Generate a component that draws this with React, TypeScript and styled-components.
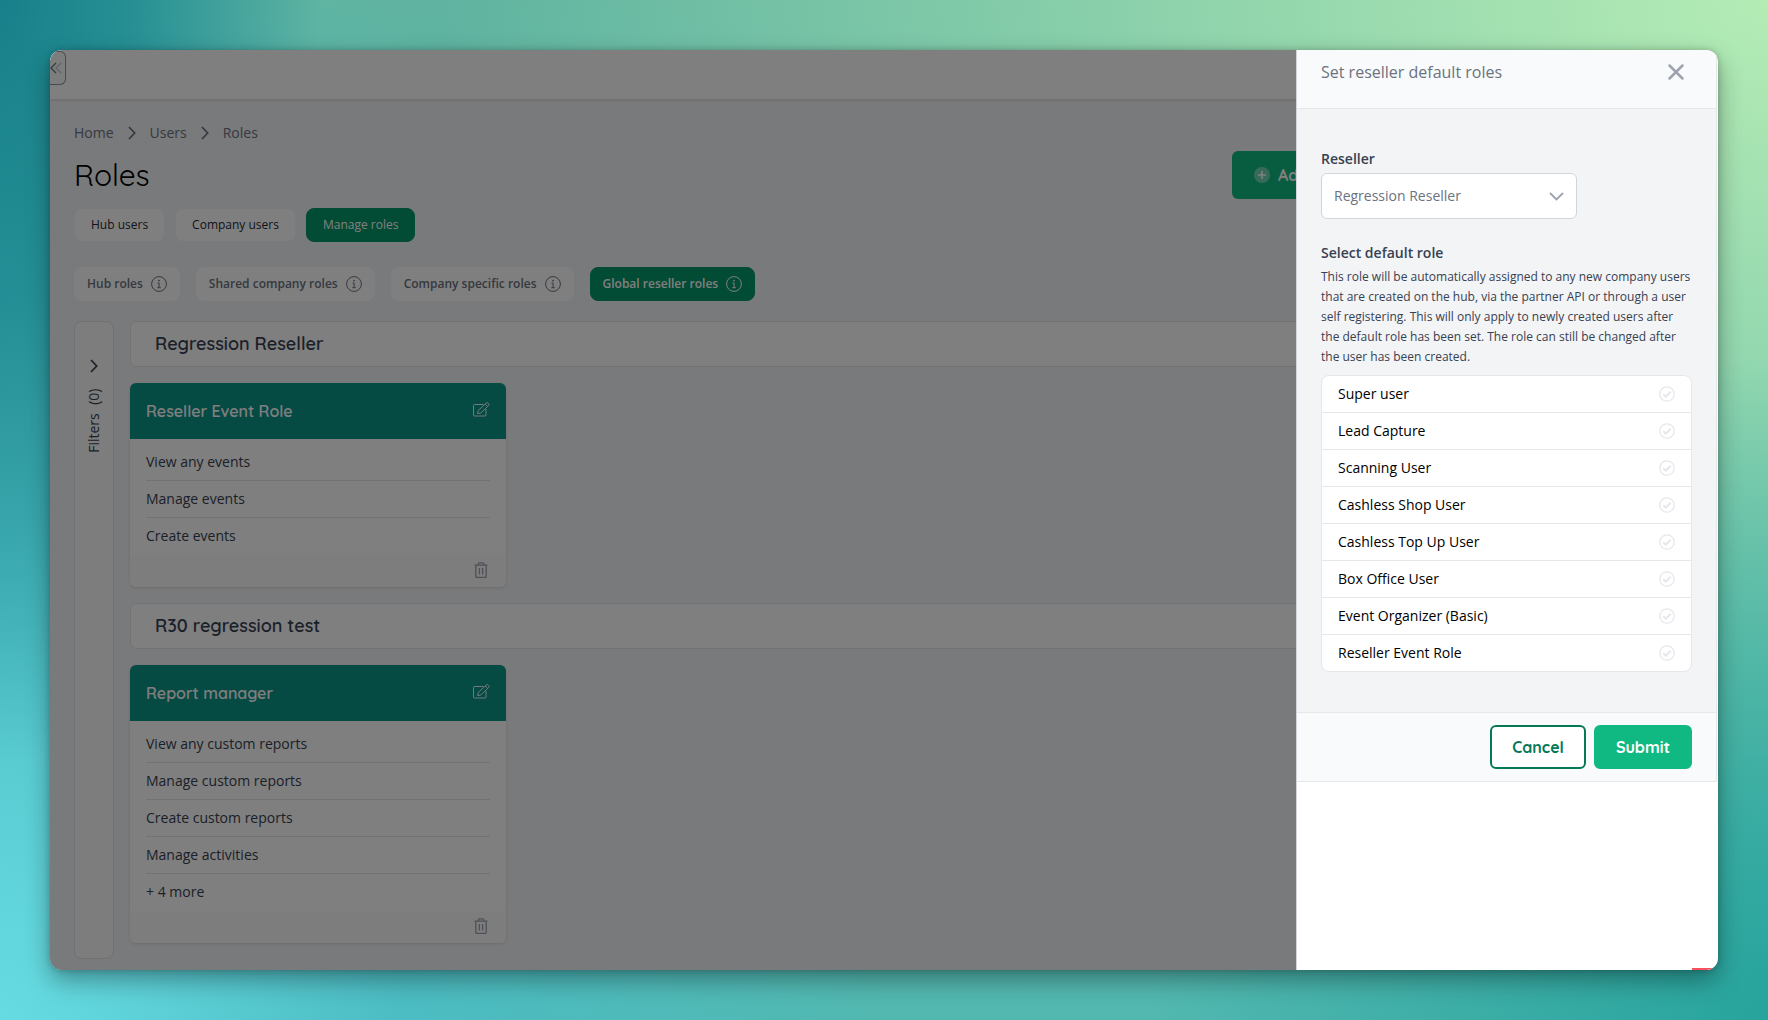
import React, { useState } from "react";
import styled, { createGlobalStyle, css } from "styled-components";

const headingFont = `Quicksand, Lato, "Open Sans", sans-serif`;
const bodyFont = `"Open Sans", "Noto Sans", sans-serif`;

const GlobalStyle = createGlobalStyle`
  *, *::before, *::after { box-sizing: border-box; }
  body {
    margin: 0;
    font-family: ${bodyFont};
    font-size: 14px;
    line-height: 20px;
    color: #374151;
  }
  button, select, input { font-family: inherit; }
  h1, h2, h3, p, ul, ol { margin: 0; padding: 0; }
  ul, ol { list-style: none; }
`;

const Backdrop = styled.div`
  height: 100vh;
  padding: 50px;
  background:
    radial-gradient(ellipse 18% 75% at 0% 0%, #17808a 0%, rgba(28, 136, 144, 0.85) 40%, rgba(40, 150, 155, 0) 100%),
    radial-gradient(ellipse 50% 110% at 0% 100%, #66dce2 0%, rgba(74, 190, 200, 0.8) 45%, rgba(60, 175, 180, 0) 100%),
    radial-gradient(ellipse 35% 65% at 100% 100%, #27a49d 0%, rgba(39, 164, 157, 0) 100%),
    radial-gradient(ellipse 75% 95% at 100% 0%, #b4ecb5 0%, rgba(180, 236, 181, 0) 100%),
    linear-gradient(#5fb3a0, #52b8b0);
`;

const Window = styled.div`
  position: relative;
  height: 100%;
  border-radius: 12px;
  overflow: hidden;
  background: #f3f4f6;
`;

const WindowShadow = styled.div`
  height: 100%;
  border-radius: 12px;
  box-shadow: 0 10px 24px rgba(0, 0, 0, 0.35), 0 0 6px rgba(0, 0, 0, 0.2);
`;

const TopBar = styled.header`
  height: 50px;
  padding-top: 1px;
  background: #fff;
  border-bottom: 1px solid #e2e3e6;
  box-shadow: 0 1px 2px rgba(0, 0, 0, 0.08);
`;

const CollapseButton = styled.button`
  display: flex;
  align-items: center;
  width: 16px;
  height: 34px;
  margin: 0;
  padding: 0;
  border: 1px solid #8f949e;
  border-left: 0;
  border-radius: 0 6px 6px 0;
  background: #f9fafb;
`;

const Page = styled.main`
  padding: 23px 24px 11px;
`;

const Breadcrumbs = styled.ol`
  display: flex;
  align-items: center;
  gap: 14px;
  color: #6b7280;

  a {
    color: inherit;
    text-decoration: none;
  }
  li {
    display: flex;
    align-items: center;
    gap: 14px;
  }
`;

const TitleRow = styled.div`
  display: grid;
  grid-template-columns: 1fr 462px;
  align-items: center;
  margin-top: 8px;
`;

const Title = styled.h1`
  font: 400 30px/36px ${headingFont};
  color: #000;
`;

const AddButton = styled.button`
  display: flex;
  align-items: center;
  gap: 8px;
  height: 48px;
  padding: 0 22px;
  border: 0;
  border-radius: 6px;
  background: #10b981;
  color: #fff;
  font: 700 16px/24px ${headingFont};
`;

const Tabs = styled.nav`
  display: flex;
  gap: 10px;
  margin-top: 9px;
`;

const activeTab = css`
  border-color: #059669;
  background: #059669;
  color: #fff;
`;

const Tab = styled.button<{ $active?: boolean }>`
  height: 34px;
  padding: 0 16px;
  border: 1px solid #f3f4f6;
  border-radius: 8px;
  background: #fff;
  color: #1f2937;
  font-size: 12px;
  line-height: 16px;
  ${(p) => p.$active && activeTab}
`;

const SubTabs = styled.nav`
  display: flex;
  gap: 16px;
  margin-top: 25px;
`;

const SubTab = styled.button<{ $active?: boolean }>`
  display: flex;
  align-items: center;
  gap: 8px;
  height: 34px;
  padding: 0 12px;
  border: 1px solid #fff;
  border-radius: 8px;
  background: #fff;
  color: #6b7280;
  font-size: 12px;
  font-weight: 600;
  line-height: 16px;
  ${(p) => p.$active && activeTab}
`;

const Columns = styled.div`
  display: flex;
  gap: 16px;
  margin-top: 20px;
`;

const FilterRail = styled.button`
  display: flex;
  flex-direction: column;
  align-items: center;
  gap: 16px;
  flex: 0 0 40px;
  padding: 37px 0 0;
  border: 1px solid #e0e2e6;
  border-radius: 8px;
  background: #f8faf8;
  color: #374151;
  font-size: 14px;
  line-height: 20px;
`;

const RailText = styled.span`
  display: flex;
  gap: 8px;
  writing-mode: vertical-rl;
  transform: rotate(180deg);
`;

const Groups = styled.div`
  flex: 1;
  display: flex;
  flex-direction: column;
  gap: 16px;
  padding-bottom: 16px;
`;

const GroupTitle = styled.h2`
  height: 46px;
  padding: 10px 24px;
  border: 1px solid #e5e7eb;
  border-radius: 6px;
  background: #fff;
  color: #374151;
  font: 600 18px/24px ${headingFont};
`;

const Card = styled.article`
  width: 376px;
  border-radius: 6px;
  overflow: hidden;
  background: #fff;
  box-shadow: 0 1px 3px rgba(0, 0, 0, 0.12);
`;

const CardHead = styled.header`
  display: flex;
  align-items: center;
  justify-content: space-between;
  height: 56px;
  padding: 0 16px;
  background: #0d9488;
  color: #fff;
`;

const CardTitle = styled.h3`
  font: 600 16px/24px ${headingFont};
`;

const IconButton = styled.button`
  display: flex;
  padding: 0;
  border: 0;
  background: none;
  color: inherit;
`;

const CardRows = styled.ul`
  padding: 5px 16px 0;
`;

const CardRow = styled.li`
  height: 37px;
  padding: 8px 0;
  border-bottom: 1px solid #e5e7eb;

  &:last-child {
    border-bottom-color: transparent;
  }
`;

const CardFoot = styled.footer`
  display: flex;
  align-items: center;
  justify-content: flex-end;
  height: 32px;
  padding: 0 18px 2px;
  background: #f8fbf8;
  color: #9ca3af;
`;

const Overlay = styled.div`
  position: absolute;
  inset: 0;
  background: rgba(0, 0, 0, 0.5);
`;

const Drawer = styled.aside`
  position: absolute;
  top: 0;
  right: 0;
  bottom: 0;
  width: 422px;
  padding-right: 1px;
  border-left: 1px solid #d1d5db;
  background: #fff;
`;

const DrawerForm = styled.form`
  border-right: 1px solid #e5e7eb;
`;

const DrawerHead = styled.header`
  display: flex;
  align-items: flex-start;
  justify-content: space-between;
  height: 59px;
  padding: 10px 32px 0 24px;
  border-bottom: 1px solid #e5e7eb;
  background: #f9fafc;
`;

const DrawerTitle = styled.h2`
  color: #6b7280;
  font-size: 16px;
  font-weight: 400;
  line-height: 24px;
`;

const CloseButton = styled(IconButton)`
  align-items: center;
  height: 24px;
  color: #9ca3af;
`;

const DrawerBody = styled.div`
  padding: 40px 24px;
  background: #f3f4f6;
`;

const FieldLabel = styled.label`
  display: block;
  font-weight: 600;
`;

const SelectWrap = styled.div`
  display: grid;
  align-items: center;
  width: 256px;
  margin: 4px 0 24px;

  > * {
    grid-area: 1 / 1;
  }
  > svg {
    justify-self: end;
    margin-right: 13px;
    pointer-events: none;
  }
`;

const Select = styled.select`
  appearance: none;
  width: 100%;
  height: 46px;
  padding: 0 12px;
  border: 1px solid #d1d5db;
  border-radius: 6px;
  background: #fff;
  color: #6b7280;
  font-size: 14px;
  line-height: 20px;
`;

const RoleField = styled.fieldset`
  margin: 0;
  padding: 0;
  border: 0;
  min-width: 0;
`;

const RoleLegend = styled.legend`
  padding: 0;
  font-weight: 600;
`;

const Hint = styled.p`
  margin-top: 4px;
  font-size: 12px;
  line-height: 20px;
`;

const RoleList = styled.ul`
  margin-top: 8px;
  border: 1px solid #e5e7eb;
  border-radius: 8px;
  overflow: hidden;
  background: #fff;
`;

const RoleItem = styled.li`
  & + & {
    border-top: 1px solid #e5e7eb;
  }
`;

const RoleLabel = styled.label`
  position: relative;
  display: flex;
  align-items: center;
  justify-content: space-between;
  height: 36px;
  padding: 0 16px;
  color: #000;
`;

const RoleRadio = styled.input`
  position: absolute;
  right: 16px;
  width: 16px;
  height: 16px;
  margin: 0;
  opacity: 0;

  &:checked + svg {
    color: #10b981;
  }
`;

const CheckIcon = styled.svg`
  color: #e5e7eb;
`;

const DrawerFoot = styled.footer`
  display: flex;
  justify-content: flex-end;
  gap: 8px;
  padding: 12px 24px;
  border: solid #e5e7eb;
  border-width: 1px 0;
  background: #f9fafc;
`;

const ActionButton = styled.button<{ $primary?: boolean }>`
  height: 44px;
  padding: 0 20px;
  border: 2px solid ${(p) => (p.$primary ? "#10b981" : "#047857")};
  border-radius: 6px;
  background: ${(p) => (p.$primary ? "#10b981" : "#fff")};
  color: ${(p) => (p.$primary ? "#fff" : "#047857")};
  font: 700 16px/24px ${headingFont};
`;

const AlertStrip = styled.div`
  position: absolute;
  right: 0;
  bottom: 0;
  width: 26px;
  height: 2px;
  background: #f9505c;
`;

const Chevron = () => (
  <svg width="8" height="14" viewBox="0 0 8 14" fill="none" stroke="currentColor" strokeWidth="1.7" aria-hidden="true">
    <path d="M1 1l5.700 6L1 13" />
  </svg>
);

const InfoIcon = () => (
  <svg width="16" height="16" viewBox="0 0 16 16" fill="none" stroke="currentColor" aria-hidden="true">
    <circle cx="8" cy="8" r="7.4" />
    <circle cx="8" cy="4.6" r="0.9" fill="currentColor" stroke="none" />
    <path d="M6.5 7h1.6v4.6M6.3 11.7h3.5" />
  </svg>
);

const EditIcon = () => (
  <svg width="17" height="18" viewBox="0 0 17 18" fill="none" stroke="currentColor" strokeWidth="0.9" strokeLinejoin="round" aria-hidden="true">
    <path d="M10.5 2.5H1.5a1 1 0 0 0-1 1v9.5a1 1 0 0 0 1 1h10.5a1 1 0 0 0 1-1V7" />
    <path d="M4.5 11.5l.8-3L13.3 1a1.2 1.2 0 0 1 1.7 0l.7.7a1.2 1.2 0 0 1 0 1.7L7.8 11l-3.3.5zM12.2 2l2.4 2.4" />
  </svg>
);

const TrashIcon = () => (
  <svg width="14" height="16" viewBox="0 0 14 16" fill="none" stroke="currentColor" strokeWidth="1.3" aria-hidden="true">
    <path d="M0.5 3.2h13M4.3 3V1.8a1 1 0 0 1 1-1h3.4a1 1 0 0 1 1 1V3M1.8 3.2v11.2a1 1 0 0 0 1 1h8.4a1 1 0 0 0 1-1V3.2M5.4 6v6.6M8.600 6v6.6" />
  </svg>
);

const groups = [
  {
    name: "Regression Reseller",
    role: "Reseller Event Role",
    rights: ["View any events", "Manage events", "Create events"],
  },
  {
    name: "R30 regression test",
    role: "Report manager",
    rights: ["View any custom reports", "Manage custom reports", "Create custom reports", "Manage activities", "+ 4 more"],
  },
];

const defaultRoles = [
  "Super user",
  "Lead Capture",
  "Scanning User",
  "Cashless Shop User",
  "Cashless Top Up User",
  "Box Office User",
  "Event Organizer (Basic)",
  "Reseller Event Role",
];

const userTabs = ["Hub users", "Company users", "Manage roles"];
const roleTabs = ["Hub roles", "Shared company roles", "Company specific roles", "Global reseller roles"];

export default function App() {
  const [role, setRole] = useState("");

  return (
    <>
      <GlobalStyle />
      <Backdrop>
        <WindowShadow>
          <Window>
            <TopBar>
              <CollapseButton aria-label="Collapse menu">
                <svg width="12" height="12" viewBox="0 0 12 12" fill="none" strokeWidth="1.3" aria-hidden="true">
                  <path d="M6 1L1 6l5 5" stroke="#6b7280" />
                  <path d="M11 1L6 6l5 5" stroke="#c3c7ce" />
                </svg>
              </CollapseButton>
            </TopBar>

            <Page>
              <Breadcrumbs>
                <li><a href="#home">Home</a><Chevron /></li>
                <li><a href="#users">Users</a><Chevron /></li>
                <li><a href="#roles">Roles</a></li>
              </Breadcrumbs>

              <TitleRow>
                <Title>Roles</Title>
                <AddButton>
                  <svg width="16" height="16" viewBox="0 0 16 16" aria-hidden="true">
                    <circle cx="8" cy="8" r="8" fill="#fff" fillOpacity="0.4" />
                    <path d="M8 4v8M4 8h8" stroke="#fff" strokeWidth="1.6" />
                  </svg>
                  Add
                </AddButton>
              </TitleRow>

              <Tabs aria-label="Users">
                {userTabs.map((t) => (
                  <Tab key={t} $active={t === "Manage roles"}>{t}</Tab>
                ))}
              </Tabs>

              <SubTabs aria-label="Role types">
                {roleTabs.map((t) => (
                  <SubTab key={t} $active={t === "Global reseller roles"}>
                    {t}
                    <InfoIcon />
                  </SubTab>
                ))}
              </SubTabs>

              <Columns>
                <FilterRail>
                  <Chevron />
                  <RailText><span>Filters</span><span>(0)</span></RailText>
                </FilterRail>
                <Groups>
                  {groups.map((g) => (
                    <React.Fragment key={g.name}>
                      <GroupTitle>{g.name}</GroupTitle>
                      <Card>
                        <CardHead>
                          <CardTitle>{g.role}</CardTitle>
                          <IconButton aria-label="Edit role"><EditIcon /></IconButton>
                        </CardHead>
                        <CardRows>
                          {g.rights.map((r) => (
                            <CardRow key={r}>{r}</CardRow>
                          ))}
                        </CardRows>
                        <CardFoot>
                          <IconButton aria-label="Delete role"><TrashIcon /></IconButton>
                        </CardFoot>
                      </Card>
                    </React.Fragment>
                  ))}
                </Groups>
              </Columns>
            </Page>

            <Overlay />

            <Drawer aria-label="Set reseller default roles">
              <DrawerForm onSubmit={(e) => e.preventDefault()}>
                <DrawerHead>
                  <DrawerTitle>Set reseller default roles</DrawerTitle>
                  <CloseButton type="button" aria-label="Close">
                    <svg width="16" height="16" viewBox="0 0 16 16" stroke="currentColor" strokeWidth="2.5" strokeLinecap="round" aria-hidden="true">
                      <path d="M1.5 1.5l13 13M14.5 1.5l-13 13" />
                    </svg>
                  </CloseButton>
                </DrawerHead>

                <DrawerBody>
                  <FieldLabel htmlFor="reseller">Reseller</FieldLabel>
                  <SelectWrap>
                    <Select id="reseller" defaultValue="Regression Reseller">
                      <option>Regression Reseller</option>
                      <option>R30 regression test</option>
                    </Select>
                    <svg width="15" height="9" viewBox="0 0 15 9" fill="none" stroke="#9ca3af" strokeWidth="1.8" aria-hidden="true">
                      <path d="M1 1l6.5 6.5L14 1" />
                    </svg>
                  </SelectWrap>

                  <RoleField>
                    <RoleLegend>Select default role</RoleLegend>
                    <Hint>
                      This role will be automatically assigned to any new company users that are created on the hub, via the
                      partner API or through a user self registering. This will only apply to newly created users after the
                      default role has been set. The role can still be changed after the user has been created.
                    </Hint>
                    <RoleList>
                      {defaultRoles.map((r) => (
                        <RoleItem key={r}>
                          <RoleLabel>
                            {r}
                            <RoleRadio type="radio" name="role" checked={role === r} onChange={() => setRole(r)} />
                            <CheckIcon width="16" height="16" viewBox="0 0 16 16" fill="none" stroke="currentColor" aria-hidden="true">
                              <circle cx="8" cy="8" r="7.2" strokeWidth="1.3" />
                              <path d="M4.3 8.3l2.5 2.4 4.9-5" strokeWidth="2" />
                            </CheckIcon>
                          </RoleLabel>
                        </RoleItem>
                      ))}
                    </RoleList>
                  </RoleField>
                </DrawerBody>

                <DrawerFoot>
                  <ActionButton type="button">Cancel</ActionButton>
                  <ActionButton type="submit" $primary>Submit</ActionButton>
                </DrawerFoot>
              </DrawerForm>
              <AlertStrip />
            </Drawer>
          </Window>
        </WindowShadow>
      </Backdrop>
    </>
  );
}
